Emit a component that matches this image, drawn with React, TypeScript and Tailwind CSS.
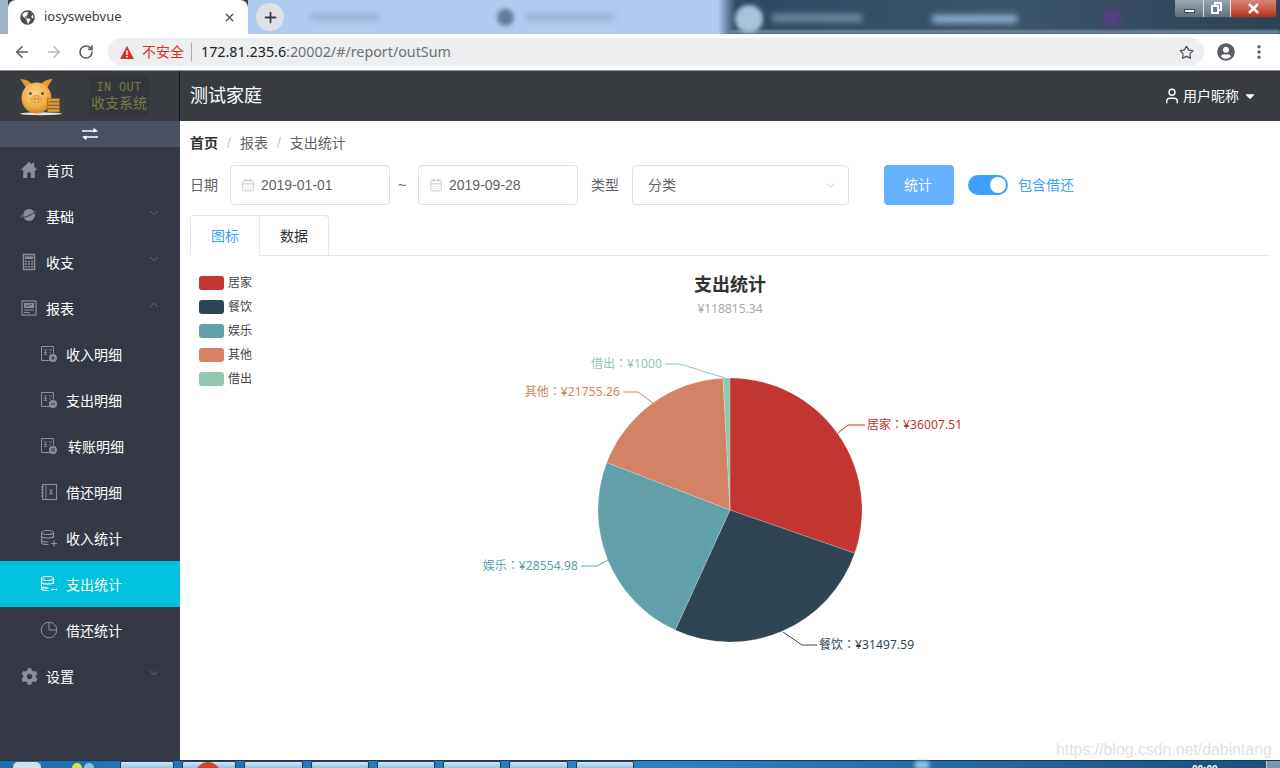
import { ArrowLeft, ArrowRight, RotateCw, Star, EllipsisVertical, Plus, X, ChevronDown, ChevronUp, CalendarDays, User } from 'lucide-react';
import { FaCog, FaGlobeAmericas, FaUserCircle, FaCaretDown } from 'react-icons/fa';

const slices = [
  { name: '居家', value: 36007.51, color: '#c23531' },
  { name: '餐饮', value: 31497.59, color: '#2f4554' },
  { name: '娱乐', value: 28554.98, color: '#61a0a8' },
  { name: '其他', value: 21755.26, color: '#d48265' },
  { name: '借出', value: 1000, color: '#91c7ae' },
];

const labels = [
  { name: '居家', amount: '¥36007.51', x: 867, y: 429, anchor: 'start', color: '#c23531', line: '838,433 848,425 865,425' },
  { name: '餐饮', amount: '¥31497.59', x: 819, y: 649, anchor: 'start', color: '#2f4554', line: '783,632 802,645 817,645' },
  { name: '娱乐', amount: '¥28554.98', x: 578, y: 570, anchor: 'end', color: '#61a0a8', line: '608,560 597,566 581,566' },
  { name: '其他', amount: '¥21755.26', x: 620, y: 396, anchor: 'end', color: '#d48265', line: '653,403 638,392 623,392' },
  { name: '借出', amount: '¥1000', x: 662, y: 368, anchor: 'end', color: '#91c7ae', line: '725,378 680,364 665,364' },
];

const total = slices.reduce((sum, s) => sum + s.value, 0);

function arcs() {
  const cx = 730;
  const cy = 510;
  const r = 132;
  let start = -Math.PI / 2;
  return slices.map((s) => {
    const end = start + (s.value / total) * Math.PI * 2;
    const large = end - start > Math.PI ? 1 : 0;
    const d = `M${cx} ${cy}L${cx + r * Math.cos(start)} ${cy + r * Math.sin(start)}A${r} ${r} 0 ${large} 1 ${cx + r * Math.cos(end)} ${cy + r * Math.sin(end)}Z`;
    start = end;
    return { d, color: s.color };
  });
}

function IconHome() {
  return (
    <svg viewBox="0 0 18 18" className="w-[18px] h-[18px]" fill="currentColor">
      <path d="M9 .8L.6 9h2.600v8h4v-5.500h3.600V17h4V9h2.600l-3.200-3.100V2h-2.200v1.800z" />
    </svg>
  );
}

function IconPlanet() {
  return (
    <svg viewBox="0 0 18 18" className="w-[18px] h-[18px]" fill="currentColor">
      <circle cx="9" cy="8" r="6" />
      <path d="M3.600 6.600C1.400 8 .3 9.400.7 10.200c.6 1.100 4.100.6 8-1.200s6.900-4 7.900-5.300c-.2-.4-1.200-.4-2.400 0 .6.2.8.5.8.5-.8 1.200-3.200 2.900-6.400 4.400C5.500 9.900 3 10.400 2 10c.1-.6.8-1.500 1.900-2.300z" stroke="#353945" strokeWidth=".6" />
    </svg>
  );
}

function IconCalc() {
  return (
    <svg viewBox="0 0 18 18" className="w-[18px] h-[18px]" fill="none" stroke="currentColor" strokeWidth="1.500">
      <rect x="3.500" y="1.500" width="11" height="15" />
      <rect x="5" y="3.500" width="8" height="2.500" fill="currentColor" stroke="none" />
      <path d="M5 8.500h8M5 11h8M5 13.700h8" strokeDasharray="2 1" strokeWidth="1.600" />
    </svg>
  );
}

function IconReport() {
  return (
    <svg viewBox="0 0 18 18" className="w-[18px] h-[18px]" fill="none" stroke="currentColor" strokeWidth="1.200">
      <rect x="2" y="2" width="14" height="14" />
      <rect x="4" y="4" width="10" height="5" fill="currentColor" stroke="none" />
      <path d="M5 8l2-2 2 1 3-2" stroke="#353945" strokeWidth=".8" />
      <path d="M4 11h10M4 13.500h6" />
    </svg>
  );
}

// ledger sheet with a small round badge, used by the detail entries
function IconLedger({ badge }: { badge: string }) {
  return (
    <svg viewBox="0 0 18 18" className="w-[18px] h-[18px]" fill="none" stroke="currentColor" strokeWidth="1">
      <path d="M10 15.500H1.500v-14h12v7" />
      <path d="M4 4l1.500 2L7 4M5.500 6v4M3.800 7.500h3.400M3.800 9.500h3.400M9 5h3M9 8h2" strokeWidth=".8" />
      <circle cx="13" cy="13" r="4" fill="currentColor" stroke="none" />
      <path d={badge} stroke="#353945" strokeWidth="1" />
    </svg>
  );
}

function IconBook() {
  return (
    <svg viewBox="0 0 18 18" className="w-[18px] h-[18px]" fill="none" stroke="currentColor" strokeWidth="1">
      <rect x="2.500" y="1.500" width="14" height="15" />
      <path d="M1 4h3M1 7h3M1 10h3M1 13h3M6 1.500v15" strokeWidth=".9" />
      <path d="M9.500 6l1.500 2 1.500-2M11 8v4M9.500 9h3M9.500 10.700h3" strokeWidth=".9" />
    </svg>
  );
}

function IconDb({ mark }: { mark: string }) {
  return (
    <svg viewBox="0 0 18 18" className="w-[18px] h-[18px]" fill="none" stroke="currentColor" strokeWidth="1.100">
      <ellipse cx="7.500" cy="3.500" rx="6" ry="2" />
      <path d="M1.500 3.500v10c0 1.100 2.700 2 6 2h1M13.500 3.500V9M1.500 7c0 1.100 2.700 2 6 2s6-.9 6-2M1.500 11c0 1.100 2.700 2 6 2h1" />
      <path d={mark} strokeWidth="1.200" />
    </svg>
  );
}

function IconPie() {
  return (
    <svg viewBox="0 0 18 18" className="w-[18px] h-[18px]" fill="none" stroke="currentColor" strokeWidth="1">
      <circle cx="9" cy="9" r="7.800" />
      <path d="M9 1.200V9h7.800" />
    </svg>
  );
}

function IconSwap() {
  return (
    <svg viewBox="0 0 18 14" className="w-[18px] h-[14px]" fill="currentColor">
      <path d="M1 3.200h11.500V.8L17 4.200l-4.500 1.200V4.700H1zM17 9.300H5.500v-.7L1 9.800l4.500 3.400v-2.400H17z" />
    </svg>
  );
}

const menu = [
  { label: '首页', icon: <IconHome /> },
  { label: '基础', icon: <IconPlanet />, arrow: 'down' },
  { label: '收支', icon: <IconCalc />, arrow: 'down' },
  { label: '报表', icon: <IconReport />, arrow: 'up' },
  { label: '收入明细', sub: true, icon: <IconLedger badge="M11 13h4M13 11v4" /> },
  { label: '支出明细', sub: true, icon: <IconLedger badge="M11 13h4" /> },
  { label: '转账明细', sub: true, shift: true, icon: <IconLedger badge="M11 12h4M11 14h4" /> },
  { label: '借还明细', sub: true, icon: <IconBook /> },
  { label: '收入统计', sub: true, icon: <IconDb mark="M11 14.500h6M14 11.500v6" /> },
  { label: '支出统计', sub: true, active: true, icon: <IconDb mark="M11 14.500h6" /> },
  { label: '借还统计', sub: true, icon: <IconPie /> },
  { label: '设置', icon: <FaCog className="w-[17px] h-[17px]" />, arrow: 'down' },
];

function Pig() {
  return (
    <svg viewBox="0 0 46 38" className="w-[46px] h-[38px] mt-[2px]">
      <defs>
        <radialGradient id="pigBody" cx="45%" cy="35%" r="70%">
          <stop offset="0%" stopColor="#fbd68a" />
          <stop offset="65%" stopColor="#f0ab42" />
          <stop offset="100%" stopColor="#c97a1e" />
        </radialGradient>
      </defs>
      <ellipse cx="22" cy="35.800" rx="21" ry="1.500" fill="#e8e8e8" />
      <path d="M7 10L1.500 1c5 .2 9.500 2 11.500 5.500zM28 10L33.500 1c-5 .2-9.500 2-11.500 5.500z" fill="#e59a2e" />
      <ellipse cx="17.500" cy="20" rx="15" ry="15.500" fill="url(#pigBody)" />
      <circle cx="11.500" cy="15.500" r="1.300" fill="#5b3510" />
      <circle cx="23.500" cy="15.500" r="1.300" fill="#5b3510" />
      <ellipse cx="17.500" cy="21" rx="5" ry="3.500" fill="#f3b660" stroke="#c9802a" strokeWidth=".6" />
      <circle cx="15.800" cy="21" r=".8" fill="#8a5518" />
      <circle cx="19.200" cy="21" r=".8" fill="#8a5518" />
      <g fill="#d99a3c" stroke="#8f5f1c" strokeWidth=".5">
        <rect x="28.500" y="31" width="12" height="3" />
        <rect x="28.500" y="27.500" width="12" height="3" />
        <rect x="28.500" y="24" width="12" height="3" />
        <rect x="28.500" y="20.500" width="12" height="3" />
      </g>
    </svg>
  );
}

function DateInput({ value }: { value: string }) {
  return (
    <div className="w-[160px] h-10 border border-[#dcdfe6] rounded flex items-center pl-[10px] text-sm text-[#606266]">
      <CalendarDays className="w-[14px] h-[14px] text-[#c0c4cc] mr-[6px]" strokeWidth={1.500} />
      {value}
    </div>
  );
}

export default function App() {
  return (
    <div className="relative w-[1280px] h-[768px] overflow-hidden flex flex-col bg-white font-['Liberation_Sans','Noto_Sans_CJK_SC',sans-serif]">
      {/* browser tabs */}
      <div className="relative h-[34px] flex overflow-hidden shrink-0 bg-[#2f4860]">
        <div className="w-[8px] bg-[#9fb2c6]" />
        <div className="relative z-10 w-[240px] bg-white rounded-t-lg flex items-center pl-[12px] pr-[12px]">
          <FaGlobeAmericas className="w-[15px] h-[15px] text-[#4b4f55] mr-[9px]" />
          <span className="text-[13px] text-[#3c4043] font-['Noto_Sans','Noto_Sans_CJK_SC',sans-serif]">iosyswebvue</span>
          <X className="w-[13px] h-[13px] ml-auto text-[#50545a]" strokeWidth={2.500} />
        </div>
        <div className="w-[470px] bg-[#aecdee]" />
        <div className="w-[18px] bg-gradient-to-r from-[#aecdee] to-[#2d4a62]" />
        <div className="flex-1 bg-gradient-to-r from-[#2d4a62] via-[#3c5468] to-[#2c4257]" />
        <div className="absolute left-[730px] right-0 bottom-0 h-[4px] bg-[#6f8496] blur-[1px]" />
        <div className="absolute z-10 left-[256px] top-[3px] w-[28px] h-[28px] rounded-full bg-[#dee1e6] flex items-center justify-center">
          <Plus className="w-[17px] h-[17px] text-[#3c4043]" strokeWidth={2.500} />
        </div>
        <div className="absolute left-[310px] top-[13px] w-[70px] h-[8px] bg-[#98b3d1] blur-[3px]" />
        <div className="absolute left-[497px] top-[9px] w-[17px] h-[17px] rounded-full bg-[#5f7c99] blur-[2px]" />
        <div className="absolute left-[525px] top-[13px] w-[90px] h-[8px] bg-[#98b3d1] blur-[3px]" />
        <div className="absolute left-[735px] top-[5px] w-[28px] h-[28px] rounded-full bg-[#a9c3da] blur-[2px]" />
        <div className="absolute left-[772px] top-[14px] w-[90px] h-[8px] bg-[#6f8aa3] blur-[3px]" />
        <div className="absolute left-[932px] top-[15px] w-[85px] h-[8px] bg-[#8fb0d2] blur-[3px]" />
        <div className="absolute left-[1102px] top-[8px] w-[20px] h-[20px] rounded-full bg-[#56407e] blur-[3px]" />
        {/* window controls */}
        <div className="absolute z-10 left-[1174px] top-0 w-[103px] h-[18px] flex border border-t-0 border-[#3c4a58] rounded-b-[4px] overflow-hidden">
          <div className="w-[29px] bg-gradient-to-b from-[#9aa7b3] to-[#5e6f7e] flex items-center justify-center border-r border-[#d9e0e6]">
            <div className="w-[11px] h-[4px] mt-[4px] bg-white border border-[#3c4a58]" />
          </div>
          <div className="relative w-[27px] bg-gradient-to-b from-[#9aa7b3] to-[#5e6f7e] border-r border-[#d9e0e6]">
            <div className="absolute left-[10px] top-[2px] w-[8px] h-[9px] border-2 border-white" />
            <div className="absolute left-[7px] top-[5px] w-[8px] h-[9px] bg-[#6d7c8a] border-2 border-white" />
          </div>
          <div className="flex-1 bg-gradient-to-b from-[#d98574] to-[#b3301c] flex items-center justify-center">
            <X className="w-[15px] h-[15px] text-white" strokeWidth={4} />
          </div>
        </div>
      </div>

      {/* browser toolbar */}
      <div className="h-[36px] shrink-0 bg-white flex items-center pl-[13px] pr-[12px] border-b border-[#8f9091] box-content">
        <ArrowLeft className="w-[18px] h-[18px] text-[#5a5e63]" strokeWidth={2.200} />
        <ArrowRight className="w-[18px] h-[18px] ml-[14px] text-[#b8babd]" strokeWidth={2.200} />
        <RotateCw className="w-[16px] h-[16px] ml-[15px] text-[#5a5e63]" strokeWidth={2.400} />
        <div className="ml-[14px] w-[1096px] h-[28px] rounded-full bg-[#eceef0] flex items-center pl-[12px] pr-[10px]">
          <svg viewBox="0 0 14 13" className="w-[14px] h-[13px]">
            <path d="M7 0l7 13H0z" fill="#d93025" />
            <path d="M6.200 4.500h1.600v4.500H6.200zM6.200 10h1.600v1.500H6.200z" fill="#fff" />
          </svg>
          <span className="ml-[8px] text-sm text-[#d93025]">不安全</span>
          <span className="ml-[7px] w-px h-[18px] bg-[#a8aaad]" />
          <span className="ml-[9px] text-[14.3px] text-[#202124] font-['Noto_Sans',sans-serif]">
            172.81.235.6<span className="text-[#6f7378]">:20002/#/report/outSum</span>
          </span>
          <Star className="w-[15px] h-[15px] ml-auto text-[#50545a]" strokeWidth={2} />
        </div>
        <FaUserCircle className="w-[18px] h-[18px] ml-[13px] text-[#5a5e63]" />
        <EllipsisVertical className="w-[18px] h-[18px] ml-[15px] text-[#5a5e63]" strokeWidth={2.500} />
      </div>

      {/* app */}
      <div className="flex-1 min-h-0 flex">
        <aside className="w-[180px] shrink-0 bg-[#353945] flex flex-col">
          <div className="h-[50px] shrink-0 bg-[#393d42] border-r border-[#15171a] flex items-center pl-[19px]">
            <Pig />
            <div className="ml-[24px] w-[60px] h-[40px] bg-[#34373b] flex flex-col items-center justify-center text-[#777b45]">
              <div className="text-[12px] leading-[12px] font-['Liberation_Mono',monospace] tracking-[0.3px]">IN OUT</div>
              <div className="text-[14px] leading-[16px] font-['Noto_Sans_CJK_SC',serif]">收支系统</div>
            </div>
          </div>
          <div className="h-[26px] shrink-0 bg-[#4a5064] flex items-center justify-center text-white">
            <IconSwap />
          </div>
          {menu.map((item) => (
            <div
              key={item.label}
              className={`h-[46px] shrink-0 flex items-center pt-[2px] text-sm text-white ${item.sub ? 'pl-[40px]' : 'pl-[20px]'} ${item.active ? 'bg-[#00c1de]' : ''}`}
            >
              <span className={`w-[18px] -mt-[2px] flex justify-center ${item.active ? 'text-white' : 'text-[#8a8f99]'}`}>{item.icon}</span>
              <span className={item.shift ? 'ml-[10px]' : 'ml-[8px]'}>{item.label}</span>
              {item.arrow === 'down' && <ChevronDown className="w-[14px] h-[14px] ml-auto mr-[19px] -mt-[8px] text-[#6f7480]" strokeWidth={1.500} />}
              {item.arrow === 'up' && <ChevronUp className="w-[14px] h-[14px] ml-auto mr-[19px] -mt-[8px] text-[#6f7480]" strokeWidth={1.500} />}
            </div>
          ))}
        </aside>

        <main className="flex-1 min-w-0 flex flex-col">
          <header className="h-[50px] shrink-0 bg-[#393d42] flex items-center pl-[10px] pr-[23px] text-white">
            <span className="text-lg">测试家庭</span>
            <User className="w-[18px] h-[18px] ml-auto" strokeWidth={1.800} />
            <span className="ml-[2px] text-sm">用户昵称</span>
            <FaCaretDown className="w-[14px] h-[14px] ml-[4px]" />
          </header>

          <div className="flex-1 pl-[10px] pr-[10px]">
            <div className="h-[44px] flex items-center text-sm text-[#606266]">
              <span className="font-bold text-[#303133]">首页</span>
              <span className="mx-[9px] text-[#c0c4cc]">/</span>
              <span>报表</span>
              <span className="mx-[9px] text-[#c0c4cc]">/</span>
              <span>支出统计</span>
            </div>

            <div className="h-10 flex items-center text-sm text-[#606266]">
              <span className="w-[40px]">日期</span>
              <DateInput value="2019-01-01" />
              <span className="w-[28px] pl-[8px]">~</span>
              <DateInput value="2019-09-28" />
              <span className="ml-[13px] w-[41px]">类型</span>
              <div className="w-[217px] h-10 border border-[#dcdfe6] rounded flex items-center px-[15px]">
                分类
                <ChevronDown className="w-[15px] h-[15px] ml-auto -mr-[5px] text-[#c0c4cc]" strokeWidth={1.500} />
              </div>
              <button className="ml-[35px] w-[70px] h-10 pr-[2px] rounded bg-[#66b1ff] text-white text-sm">统计</button>
              <div className="ml-[14px] w-10 h-5 rounded-full bg-[#409eff] flex items-center justify-end pr-[2px]">
                <div className="w-4 h-4 rounded-full bg-white" />
              </div>
              <span className="ml-[10px] text-[#409eff]">包含借还</span>
            </div>

            <div className="mt-[10px] h-[41px] flex border-b border-[#e4e7ed] text-sm">
              <div className="w-[70px] h-[41px] border border-[#e4e7ed] border-b-white rounded-tl flex items-center justify-center text-[#409eff]">图标</div>
              <div className="w-[69px] h-[40px] border border-l-0 border-b-0 border-[#e4e7ed] rounded-tr flex items-center justify-center text-[#303133]">数据</div>
            </div>

            {/* chart */}
            <div className="relative">
              <div className="absolute left-[9px] top-[20px] flex flex-col gap-[10px]">
                {slices.map((s) => (
                  <div key={s.name} className="h-[14px] flex items-center text-xs text-[#444]">
                    <span className="w-[25px] h-[14px] rounded-[3px]" style={{ backgroundColor: s.color }} />
                    <span className="ml-[4px]">{s.name}</span>
                  </div>
                ))}
              </div>
              <div className="h-[70px] pt-[15px] text-center font-['Noto_Sans','Noto_Sans_CJK_SC',sans-serif]">
                <div className="text-lg leading-[26px] font-bold text-[#333]">支出统计</div>
                <div className="text-xs leading-[16px] mt-[4px] text-[#aaa]">¥118815.34</div>
              </div>
              <svg viewBox="190 326 1080 340" className="w-[1080px] h-[340px] block font-['Noto_Sans','Noto_Sans_CJK_SC',sans-serif]">
                {arcs().map((a) => (
                  <path key={a.color} d={a.d} fill={a.color} stroke="#fff" strokeWidth=".2" />
                ))}
                {labels.map((l) => (
                  <g key={l.name}>
                    <polyline points={l.line} fill="none" stroke={l.color} strokeWidth="1" />
                    <text x={l.x} y={l.y} textAnchor={l.anchor as 'start' | 'end'} fontSize="12" fill={l.color}>
                      {l.name}
                      <tspan fontFamily="'Noto Sans CJK TC'">：</tspan>
                      <tspan letterSpacing=".12">{l.amount}</tspan>
                    </text>
                  </g>
                ))}
              </svg>
            </div>
          </div>
        </main>
      </div>

      {/* windows taskbar */}
      <div className="relative h-[8px] shrink-0 bg-gradient-to-r from-[#1f6fb0] via-[#2a82c8] to-[#1c4f80] border-t border-[#20374f] flex">
        <div className="absolute left-[12px] top-0 w-[30px] h-[12px] rounded-full bg-[#cfe0ec] border border-[#38617f]" />
        <div className="absolute left-[72px] top-[2px] w-[10px] h-[10px] rounded-full bg-[#d8e23a]" />
        <div className="absolute left-[84px] top-[2px] w-[10px] h-[10px] rounded-full bg-[#7fc4ec]" />
        <div className="ml-[120px] flex gap-[8px]">
          {[54, 54, 59, 58, 58, 58, 59, 58].map((w, i) => (
            <div key={i} className="h-[8px] rounded-t-[2px] border border-[#1a3f60] bg-gradient-to-b from-[#d5eaf6] to-[#8cc3e3]" style={{ width: w }} />
          ))}
        </div>
        <div className="absolute left-[196px] top-[1px] w-[24px] h-[24px] rounded-full bg-[#d5402f]" />
        <div className="absolute left-[915px] top-0 w-[14px] h-[8px] bg-[#9cc4e8] blur-[2px]" />
        <div className="absolute left-[1192px] top-[4px] text-[10px] leading-[10px] font-bold text-white">00:00</div>
        <div className="absolute right-0 top-0 w-[14px] h-[8px] bg-[#7f95aa] border-l border-[#c3d0dc]" />
      </div>

      {/* watermark */}
      <div className="absolute left-[1056px] top-[740px] text-[15.85px] leading-[20px] text-[#e2e2e2]">https://blog.csdn.net/dabintang</div>
    </div>
  );
}
